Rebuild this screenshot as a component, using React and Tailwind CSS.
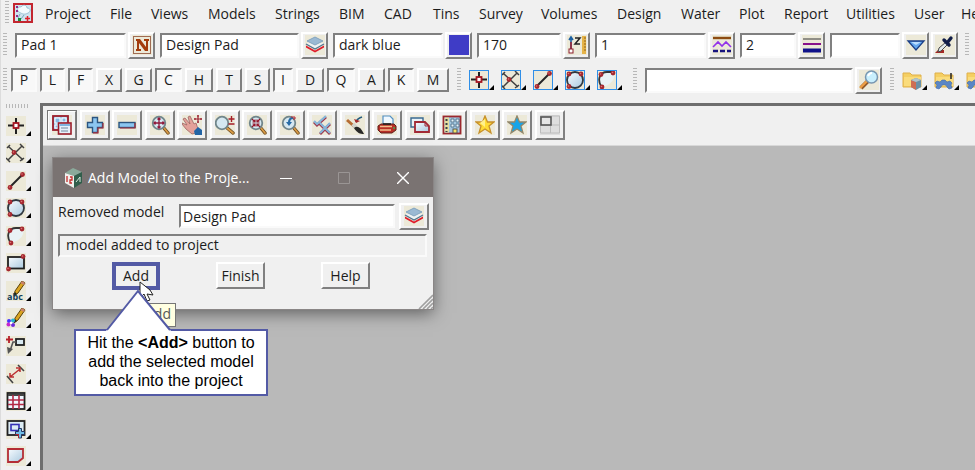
import { useState } from "react";
import clsx from "clsx";

const menus = [
  "Project", "File", "Views", "Models", "Strings", "BIM", "CAD", "Tins", "Survey",
  "Volumes", "Design", "Water", "Plot", "Report", "Utilities", "User", "Help",
];

const snaps = [
  { key: "P", on: true, width: "w-[26px]" },
  { key: "L", on: true, width: "w-[25px]" },
  { key: "F", on: true, width: "w-[25px]" },
  { key: "X", on: false, width: "w-[26px]" },
  { key: "G", on: false, width: "w-[27px]" },
  { key: "C", on: true, width: "w-[27px]" },
  { key: "H", on: false, width: "w-[28px]" },
  { key: "T", on: false, width: "w-[26px]" },
  { key: "S", on: false, width: "w-[25px]" },
  { key: "I", on: true, width: "w-[20px]" },
  { key: "D", on: false, width: "w-[28px]" },
  { key: "Q", on: true, width: "w-[28px]" },
  { key: "A", on: false, width: "w-[27px]" },
  { key: "K", on: true, width: "w-[26px]" },
  { key: "M", on: false, width: "w-[32px]" },
];

const raised = "border-2 border-t-white border-l-white border-r-[#808080] border-b-[#808080] bg-[#f0f0f0]";
const sunken = "border-2 border-t-[#808080] border-l-[#808080] border-r-[#fafafa] border-b-[#fafafa]";

function Icon({ children, bg = "#ece9d8" }) {
  return (
    <svg width="20" height="20" viewBox="0 0 20 20" fill="none" className="shrink-0" aria-hidden="true">
      <defs>
        <linearGradient id="glass" x1="0" y1="0" x2="1" y2="1">
          <stop offset="0" stopColor="#f8fcff" />
          <stop offset="1" stopColor="#aac9df" />
        </linearGradient>
      </defs>
      <rect width="20" height="20" fill={bg} />
      {children}
    </svg>
  );
}

function Dot({ x, y }) {
  return (
    <>
      <circle cx={x} cy={y} r="2.4" fill="#a52830" />
      <circle cx={x - 0.5} cy={y - 0.5} r="0.8" fill="#d87878" />
    </>
  );
}

const Lens = ({ x = 9, y = 8 }) => (
  <>
    <path d={`M${x + 4} ${y + 4}L18 18`} stroke="#6b4a20" strokeWidth="3.4" strokeLinecap="round" />
    <path d={`M${x + 5} ${y + 5}L18 18`} stroke="#d99b45" strokeWidth="1.8" strokeLinecap="round" />
    <circle cx={x} cy={y} r="6.3" fill="#d5e8f1" stroke="#71868b" strokeWidth="1.8" />
  </>
);

const PointIcon = ({ bg }) => (
  <Icon bg={bg}>
    <path d="M10 2v16M2 9.5h16" stroke="#202020" strokeWidth="2" />
    <rect x="7.5" y="7" width="5" height="5" fill="#fff" stroke="#a51420" strokeWidth="1.8" />
  </Icon>
);

const CrossIcon = ({ bg }) => (
  <Icon bg={bg}>
    <path d="M3 4l14 13M2 17L16 3M1 5l3-3M14 1l4 4M0 15l4 4M14 18l4-3" stroke="#404040" strokeWidth="1.5" />
    <Dot x={8} y={9.5} />
  </Icon>
);

const LineIcon = ({ bg }) => (
  <Icon bg={bg}>
    <path d="M4 16L16 4" stroke="#252525" strokeWidth="2" />
    <Dot x={4} y={16.5} />
    <Dot x={16.5} y={3.5} />
  </Icon>
);

const CircleIcon = ({ bg }) => (
  <Icon bg={bg}>
    <circle cx="10" cy="10" r="8" fill="url(#glass)" stroke="#303840" strokeWidth="1.8" />
    <Dot x={4} y={4} />
    <Dot x={16} y={4} />
    <Dot x={4} y={16.5} />
  </Icon>
);

const ArcIcon = ({ bg }) => (
  <Icon bg={bg}>
    <path d="M4 17C0 11 2 3 9 2h7c4 6-2 13-11 15z" fill="#e9f2f5" />
    <path d="M4 16C0 9 3 2 10 2h5" stroke="#353535" strokeWidth="1.8" />
    <Dot x={4} y={4.5} />
    <Dot x={16} y={3} />
    <Dot x={5} y={17} />
  </Icon>
);

const RectIcon = () => (
  <Icon>
    <rect x="2" y="4" width="16" height="11.5" fill="url(#glass)" stroke="#202020" strokeWidth="1.8" />
    <Dot x={17} y={3.5} />
    <Dot x={2.5} y={16} />
  </Icon>
);

const Pencil = () => (
  <>
    <path d="M16 0l3 2-7 10-4 3 1-5z" fill="#dba520" stroke="#5b430c" strokeWidth="1" />
    <path d="M16 0l3 2-1.500 2-3-2z" fill="#c98270" />
    <path d="M8 15l1-4 2 2z" fill="#222" />
  </>
);

const TextIcon = () => (
  <Icon>
    <Pencil />
    <text x="1" y="19" fontFamily="Open Sans, sans-serif" fontSize="9" fontWeight="700" fill="#123f5c">abc</text>
  </Icon>
);

const PaintIcon = () => (
  <Icon>
    <Pencil />
    <circle cx="3" cy="13" r="2" fill="#4436ff" />
    <circle cx="7" cy="12.500" r="2" fill="#24b6d4" />
    <circle cx="2.500" cy="16.500" r="2" fill="#c626cf" />
    <circle cx="7" cy="17" r="2" fill="#6d2bdc" />
    <circle cx="5" cy="15" r="1.300" fill="#fff" />
  </Icon>
);

const LeaderIcon = () => (
  <Icon>
    <path d="M3 0v7M0 3.500h7" stroke="#b5202b" strokeWidth="1.800" />
    <rect x="10" y="3" width="8" height="6" fill="#d9eaf2" stroke="#222" strokeWidth="1.800" />
    <path d="M10 6H7L4 15" stroke="#555" strokeWidth="1.600" />
    <path d="M1 11l1 7 5-5z" fill="#555" />
  </Icon>
);

const MeasureIcon = () => (
  <Icon>
    <path d="M12 1l6 6M1 12l6 7" stroke="#444" strokeWidth="1.600" />
    <path d="M4 13L14 5M4 9v4h4M10 4l4 0v4" stroke="#bc2f30" strokeWidth="1.500" />
  </Icon>
);

const GridIcon = () => (
  <Icon>
    <rect x="1.500" y="2" width="17" height="16" fill="#f0f7ff" stroke="#222" strokeWidth="1.800" />
    <path d="M2 4h16" stroke="#444" strokeWidth="2" />
    <path d="M7 4v14M13 4v14M2 9h16M2 13.500h16" stroke="#b32a45" strokeWidth="1.600" />
  </Icon>
);

const InsertIcon = () => (
  <Icon>
    <rect x="1.500" y="2" width="17" height="14" fill="#dcecf4" stroke="#222" strokeWidth="1.800" />
    <rect x="5" y="5.500" width="8" height="6" stroke="#3530b5" strokeWidth="1.600" />
    <path d="M12.500 9.500h3v3h3v3h-3v3.500h-3v-3.500h-3v-3h3z" fill="#70bde7" stroke="#26345e" strokeWidth="1" />
    <path d="M9.500 15.500h3V19" stroke="#b62633" />
  </Icon>
);

const ShapeIcon = () => (
  <Icon>
    <path d="M2 3h15v9l-5 4H2z" fill="url(#glass)" stroke="#b42d36" strokeWidth="1.800" />
  </Icon>
);

const LayersIcon = () => (
  <Icon>
    <path d="M1 10.500l9 5 9-5v2l-9 5-9-5z" fill="#e01f2c" />
    <path d="M1 9l9-4 9 4-9 5z" fill="#eef2f2" />
    <path d="M1 9l9 5 9-5" stroke="#52748e" strokeWidth="1.300" />
    <path d="M2 6l8-4 8 4-8 4z" fill="#9bb9d3" stroke="#7599b8" strokeWidth="0.800" />
  </Icon>
);

const viewTools = [
  { name: "Window menu", icon: (
    <Icon>
      <rect x="1" y="1" width="15" height="14" fill="#a8cce9" stroke="#9b1c2b" strokeWidth="1.800" />
      <path d="M3 3h5v5H3zM10 3h4v4h-4zM3 10h3v3H3z" fill="#83b9e4" stroke="#fff" />
      <rect x="6.500" y="8" width="12.500" height="11" fill="#e6f1fa" stroke="#9b1c2b" strokeWidth="1.600" />
      <path d="M7.500 10h10.500" stroke="#7fb4df" strokeWidth="2" />
      <path d="M9 13h7M9 16h7" stroke="#7388a0" />
    </Icon>
  ) },
  { name: "Add model", icon: (
    <Icon>
      <path d="M7.500 2.500h5v5h5v5h-5v5h-5v-5h-5v-5h5z" fill="#8cc6f0" stroke="#2c5580" strokeWidth="1.400" />
      <path d="M8 17.800h5V13h5V8" stroke="#a62d39" strokeWidth="1.200" />
    </Icon>
  ) },
  { name: "Remove model", icon: (
    <Icon>
      <rect x="2" y="7.500" width="16" height="5" fill="#8cc6f0" stroke="#2c5580" strokeWidth="1.400" />
      <path d="M3 13h15V8" stroke="#a62d39" strokeWidth="1.200" />
    </Icon>
  ) },
  { name: "Fit", icon: (
    <Icon>
      <Lens />
      <path d="M9 3v10M4 8h10M7.500 4.500L9 3l1.500 1.500M7.500 11.500L9 13l1.500-1.500M5.500 6.500L4 8l1.500 1.500M12.500 6.500L14 8l-1.500 1.500" stroke="#8f1839" strokeWidth="1.300" />
    </Icon>
  ) },
  { name: "Pan", icon: (
    <Icon>
      <path d="M0 8l5 2-4-6 2-1 5 6-2-7 2-1 4 8 2-1 2 6-2 4-4 1-6-5-4-5z" fill="#e3a19a" stroke="#9d6662" strokeWidth="0.800" />
      <path d="M12 16l4-4 4 3v5h-7z" fill="#2264a5" />
      <path d="M16 0v8M12 4h8M15 1h2M15 7h2M13 3v2M19 3v2" stroke="#9b1f2f" strokeWidth="1.200" />
    </Icon>
  ) },
  { name: "Zoom", icon: (
    <Icon>
      <Lens x={7} />
      <path d="M16.500 1v6M13.500 4h6M13.500 9h6" stroke="#a51d27" strokeWidth="1.400" />
    </Icon>
  ) },
  { name: "Shrink", icon: (
    <Icon>
      <Lens />
      <path d="M5 4l3 3M13 4l-3 3M5 12l3-3M13 12l-3-3M8 4.500v2.500H5.500M10 4.500v2.500h2.500M8 11.500V9H5.500M10 11.500V9h2.500" stroke="#95162b" strokeWidth="1.200" />
    </Icon>
  ) },
  { name: "Zoom previous", icon: (
    <Icon>
      <Lens />
      <path d="M13 3c-3 0-4 2-4 5" stroke="#276ba5" strokeWidth="2.200" />
      <path d="M6 7h6l-3 4z" fill="#276ba5" />
      <path d="M11 2h4v2h-2" stroke="#b52632" />
    </Icon>
  ) },
  { name: "Toggle", icon: (
    <Icon>
      <path d="M2 7l3 3 9-8M8 9l10 10M18 9L8 19" stroke="#9d3148" strokeWidth="2.800" />
      <path d="M2 6l3 3 9-8M8 8l10 10M18 8L8 18" stroke="#87b7da" strokeWidth="2.200" />
    </Icon>
  ) },
  { name: "Redraw", icon: (
    <Icon>
      <path d="M2 5l9 8" stroke="#b66d34" strokeWidth="3" />
      <path d="M8 9l4 5" stroke="#d3d3cb" strokeWidth="4" />
      <path d="M9 13c3-3 7-1 10 6-4 0-7-1-10-6z" fill="#292927" />
      <path d="M11 7c1-3 3-4 6-5" stroke="#245b7e" strokeWidth="1.800" />
      <path d="M9 4l2 4 4-2" fill="#a62829" />
    </Icon>
  ) },
  { name: "Plot", icon: (
    <Icon>
      <path d="M6 10V1h7l3 3v6z" fill="#eff8ff" stroke="#5290c4" strokeWidth="1.200" />
      <path d="M1 11l3-2h13l2 2v4l-4 3H4l-3-3z" fill="#b82e26" stroke="#61201d" />
      <path d="M3 11.500h12M3 15h11" stroke="#f2bf8d" strokeWidth="1.600" />
      <path d="M6 9h8" stroke="#222" strokeWidth="1.600" />
      <path d="M16 13h2" stroke="#48a453" strokeWidth="1.500" />
    </Icon>
  ) },
  { name: "Copy view", icon: (
    <Icon>
      <path d="M1 3h12v9H1z" fill="#e9f2f6" stroke="#386991" strokeWidth="1.400" />
      <path d="M5 7h10l4 4v6H5z" fill="url(#glass)" stroke="#a12934" strokeWidth="1.800" />
      <path d="M15 7v4h4" stroke="#a12934" />
    </Icon>
  ) },
  { name: "Building", icon: (
    <Icon>
      <rect x="1.500" y="1.500" width="17" height="17" fill="#a3c7df" stroke="#9b2730" strokeWidth="1.800" />
      <path d="M2.500 2.500H7v15H2.500z" fill="#e5dc9f" />
      <path d="M4.500 4v13" stroke="#38424a" strokeWidth="2" strokeDasharray="2 2" />
      <path d="M9 4h3v3H9zM14 4h3v3h-3zM9 9h3v3H9zM14 9h3v3h-3z" fill="#e6f3fb" stroke="#45657e" strokeWidth="0.800" />
      <rect x="11" y="14" width="4" height="4" fill="#f4e469" stroke="#555" />
    </Icon>
  ) },
  { name: "Favourites", icon: (
    <Icon>
      <path d="M10 1l2.500 6H19l-5 4 2 7-6-4-6 4 2-7-5-4h6.500z" fill="#ffdb35" stroke="#c7902c" strokeWidth="1.300" />
      <path d="M10 4v8L5 8z" fill="#fff08d" />
    </Icon>
  ) },
  { name: "User favourites", icon: (
    <Icon>
      <path d="M10 1l2.500 6H19l-5 4 2 7-6-4-6 4 2-7-5-4h6.500z" fill="#16a4e8" stroke="#92876b" strokeWidth="1.300" />
    </Icon>
  ) },
  { name: "Layout", icon: (
    <Icon bg="#dedede">
      <path d="M.5 1h19v17H.5zM10.500 1v17M1 10h18" stroke="#bcbcbc" />
      <rect x="1" y="2" width="10" height="8" fill="#e5e5e5" stroke="#555" strokeWidth="1.600" />
    </Icon>
  ) },
];

const cadTools = [
  { name: "Point", icon: <PointIcon /> },
  { name: "Intersection", icon: <CrossIcon /> },
  { name: "Line", icon: <LineIcon /> },
  { name: "Circle", icon: <CircleIcon /> },
  { name: "Arc", icon: <ArcIcon /> },
  { name: "Rectangle", icon: <RectIcon /> },
  { name: "Text", icon: <TextIcon /> },
  { name: "Symbol", icon: <PaintIcon /> },
  { name: "Leader", icon: <LeaderIcon /> },
  { name: "Dimension", icon: <MeasureIcon /> },
  { name: "Table", icon: <GridIcon /> },
  { name: "Insert", icon: <InsertIcon /> },
  { name: "Polygon", icon: <ShapeIcon /> },
];

const FolderIcon = ({ children }) => (
  <Icon bg="#f0f0f0">
    <path d="M1 3h7l2 2h9v12H1z" fill="#f5cf62" stroke="#dfb04a" />
    <path d="M2 7h17v9H2z" fill="#fadc7c" />
    {children}
  </Icon>
);

const Gear = () => (
  <path d="M2 18l1-3-2-2 2-2 3 1 2-2h3l2 2 3-1 2 2-1 2 1 3-3 1-2-2c-1-3-5-3-6 0l-2 2z" fill="#5b86c5" stroke="#3f68aa" strokeWidth="0.600" />
);

function Grip({ vertical = true }) {
  return (
    <div
      className={clsx(
        "shrink-0",
        vertical
          ? "w-1 h-6 bg-[repeating-linear-gradient(180deg,#b8b8b8_0_1px,#f0f0f0_1px_3px)]"
          : "h-1 w-6 bg-[repeating-linear-gradient(90deg,#b8b8b8_0_1px,#f0f0f0_1px_3px)]"
      )}
    />
  );
}

function ToolButton({ label, children, className }) {
  return (
    <button aria-label={label} className={clsx("flex shrink-0 items-center justify-center", raised, className)}>
      {children}
    </button>
  );
}

// flat icon with the little fly-out corner beside it
function FlyoutButton({ label, children, framed }) {
  return (
    <button aria-label={label} className="flex shrink-0 items-end">
      <span className={clsx("flex", framed && "size-5 overflow-hidden outline-1 -outline-offset-1 outline-[#2f8fe8]")}>{children}</span>
      <svg width="5" height="5" viewBox="0 0 5 5"><path d="M5 0v5H0z" fill="#000" /></svg>
    </button>
  );
}

function Field({ label, value, className, button, icon }) {
  return (
    <div className="flex shrink-0 items-center gap-0.5">
      <input aria-label={label} defaultValue={value} className={clsx("h-[25px] bg-white px-1 pb-0.5 text-sm outline-none", sunken, className)} />
      <ToolButton label={button} className="size-[27px]">{icon}</ToolButton>
    </div>
  );
}

function MenuBar() {
  return (
    <nav className="flex h-[25px] items-center gap-2 pl-1">
      <Grip />
      <svg width="20" height="20" viewBox="0 0 20 20" className="-ml-1 shrink-0" aria-hidden="true">
        <rect x="1" y="1" width="18" height="18" fill="#cfe3ee" stroke="#c3262f" strokeWidth="2" />
        <path d="M6 9c-3-2-1-6 2-5 2-3 6-2 6 1 4 0 4 4 1 5-3 2-6 1-9-1z" fill="#f4fafd" stroke="#8db6cb" strokeWidth="0.800" />
        <path d="M7 11l-2 4M11 12l-3 4" stroke="#76a8bd" />
        <path d="M3 3h2v2H3zM3 7h2v2H3zM3 12h2v2H3z" fill="#922d88" />
        <path d="M5 15h3v3H5z" fill="#188a34" />
        <path d="M12 15.500h5M14.500 13v5" stroke="#e0202a" strokeWidth="1.500" />
      </svg>
      <ul className="grid grid-cols-[65px_41px_57px_67px_64px_45px_49px_46px_62px_76px_64px_58px_45px_62px_68px_47px_47px] pl-1">
        {menus.map((m) => (
          <li key={m}><button className="text-sm">{m}</button></li>
        ))}
      </ul>
    </nav>
  );
}

function FieldBar() {
  return (
    <div className="flex h-10 items-center gap-[5px] pl-0.5">
      <Grip />
      <div className="flex items-center gap-[5px] pl-[3px]">
        <Field label="Name" value="Pad 1" className="w-[111px]" button="Names" icon={
          <Icon>
            <rect x="1.500" y="1.500" width="17" height="17" stroke="#a06b52" />
            <path d="M4 4h4l6 8V6h-2V4h5v2h-1v10h-3L7 8v6h2v2H4v-2h1V6H4z" fill="#a33b0b" />
          </Icon>
        } />
        <Field label="Model" value="Design Pad" className="w-[139px]" button="Models" icon={<LayersIcon />} />
        <Field label="Colour" value="dark blue" className="w-[110px]" button="Colours" icon={<Icon bg="#3f3cc6" />} />
        <Field label="Height" value="170" className="w-[84px]" button="Heights" icon={
          <Icon>
            <path d="M4 14V3M2 5l2-3 2 3" stroke="#1b5fa0" strokeWidth="1.600" />
            <path d="M4 7v7" stroke="#a51f2b" strokeWidth="1.500" />
            <rect x="2" y="14" width="4" height="4" fill="#fff" stroke="#8b1e2b" />
            <path d="M8 3h5l-5 6h5" stroke="#222" strokeWidth="1.500" />
            <rect x="15" y="1" width="4" height="18" fill="#e5b348" />
            <path d="M17 3h2M17 6h2M17 9h2M17 12h2M17 15h2" stroke="#92641a" />
          </Icon>
        } />
        <Field label="Line style" value="1" className="w-[111px]" button="Line styles" icon={
          <Icon>
            <path d="M1 3h18" stroke="#8d4c12" strokeWidth="2.400" />
            <path d="M1 12l5-5 4 4 4-4 5 5" stroke="#9232ea" strokeWidth="1.600" />
            <path d="M1 16h5M8 16h5M15 16h4" stroke="#17147e" strokeWidth="2.400" />
          </Icon>
        } />
        <Field label="Weight" value="2" className="w-[56px]" button="Weights" icon={
          <Icon>
            <path d="M1 4h18" stroke="#343434" />
            <path d="M1 9h18" stroke="#88128a" strokeWidth="2" />
            <path d="M1 15.500h18" stroke="#101289" strokeWidth="4" />
          </Icon>
        } />
        <Field label="Tinable" value="" className="w-[70px]" button="Tinable choices" icon={
          <Icon>
            <path d="M2 6h16l-8 9z" fill="#62a6ef" stroke="#1b3e86" strokeWidth="1.300" />
            <path d="M5 7h10l-5 3z" fill="#b9dcff" />
          </Icon>
        } />
      </div>
      <ToolButton label="Pick" className="-ml-[3px] size-[27px]">
        <Icon>
          <path d="M0 18h9v-3H3z" fill="#a32925" />
          <path d="M3 17l1-4 7-6 2 2-7 7z" fill="#dfe8ec" stroke="#4a4a4a" />
          <path d="M9 5l5 5M12 8l4-5" stroke="#101d48" strokeWidth="3.400" strokeLinecap="round" />
        </Icon>
      </ToolButton>
      <div className="pl-0.5"><Grip /></div>
    </div>
  );
}

function SnapBar() {
  const [active, setActive] = useState(snaps.filter((s) => s.on).map((s) => s.key));

  const toggle = (key) => {
    setActive(active.includes(key) ? active.filter((k) => k !== key) : [...active, key]);
  };

  return (
    <div className="flex h-[30px] items-center gap-2 pl-0.5">
      <Grip />
      <div className="-ml-1 flex gap-[3px]">
        {snaps.map(({ key, width }) => (
          <button
            key={key}
            aria-pressed={active.includes(key)}
            onClick={() => toggle(key)}
            className={clsx("h-6 shrink-0 text-sm leading-5", width, active.includes(key) ? ["bg-[#f8f8f8]", sunken] : raised)}
          >
            {key}
          </button>
        ))}
      </div>
      <Grip />
      <div className="flex gap-[7px]">
        <FlyoutButton label="Point snap" framed><PointIcon /></FlyoutButton>
        <FlyoutButton label="Intersection snap" framed><CrossIcon /></FlyoutButton>
        <FlyoutButton label="Line snap" framed><LineIcon /></FlyoutButton>
        <FlyoutButton label="Circle snap" framed><CircleIcon /></FlyoutButton>
        <FlyoutButton label="Arc snap" framed><ArcIcon /></FlyoutButton>
      </div>
      <div className="pl-[3px]"><Grip /></div>
      <Field label="Search" value="" className="w-[208px]" button="Find" icon={
        <Icon>
          <path d="M9 11l-7 7" stroke="#8f5828" strokeWidth="4" />
          <path d="M8 11l-7 7" stroke="#ec9e44" strokeWidth="2.400" />
          <circle cx="12.500" cy="7" r="6" fill="#c8effd" stroke="#7896b0" strokeWidth="1.500" />
          <path d="M9 6c1-2 2-3 4-3" stroke="#fff" strokeWidth="2" />
        </Icon>
      } />
      <Grip />
      <div className="flex gap-[7px]">
        <FlyoutButton label="Project folder">
          <FolderIcon>
            <path d="M9 10l5-2 5 2v7l-5 3-5-3z" fill="#6a91a7" />
            <path d="M9 10l5 2v8l-5-3z" fill="#ce6e54" />
            <path d="M9 10l5-2 5 2-5 2z" fill="#b2c4cb" />
          </FolderIcon>
        </FlyoutButton>
        <FlyoutButton label="Setup folder">
          <FolderIcon><Gear /><path d="M17 3v6" stroke="#222" strokeWidth="1.500" /></FolderIcon>
        </FlyoutButton>
        <FlyoutButton label="User folder"><FolderIcon><Gear /></FolderIcon></FlyoutButton>
      </div>
    </div>
  );
}

function Callout() {
  return (
    <div className="absolute left-[21px] top-[131px] w-[194px]">
      <svg width="66" height="42" viewBox="0 0 66 42" className="relative z-10 -mb-0.5 ml-8 block" aria-hidden="true">
        <path d="M0 42L32 2l33 40z" fill="#fff" />
        <path d="M1 41L32 2l32 39" fill="none" stroke="#535aa5" strokeWidth="2" />
      </svg>
      <p className="border-2 border-[#535aa5] bg-white px-1 pb-1 pt-0.5 text-center font-['Liberation_Sans',Arial,sans-serif] text-base leading-[19px] text-black">
        Hit the <b>&lt;Add&gt;</b> button to add the selected model back into the project
      </p>
    </div>
  );
}

function AddModelDialog() {
  return (
    <section role="dialog" aria-labelledby="dialog-title" className="absolute left-2.5 top-3 w-[380px] bg-[#f0f0f0] shadow-[0_4px_16px_rgba(0,0,0,0.5)] outline-1 outline-[#8a8686]">
      <header className="flex h-[39px] items-center bg-[#7a7372] pl-3 text-white">
        <svg width="17" height="20" viewBox="0 0 17 20" className="shrink-0" aria-hidden="true">
          <path d="M0 5l8-5 9 4-8 4z" fill="#8baa9b" />
          <path d="M0 5l9 3v12l-9-5z" fill="#f0f0ed" />
          <path d="M9 8l8-4v11l-8 5z" fill="#315e4b" />
          <path d="M2 8v6M5 9h2v3H5v3h2" stroke="#c32a2a" strokeWidth="1.300" fill="none" />
          <path d="M11 14l4-5v5" stroke="#d9e7dd" fill="none" />
        </svg>
        <h1 id="dialog-title" className="min-w-0 flex-1 whitespace-nowrap pl-1.5 text-sm">Add Model to the Proje...</h1>
        <div className="flex shrink-0">
          <button aria-label="Minimize" className="flex w-[58px] justify-center">
            <svg width="12" height="12" viewBox="0 0 12 12"><path d="M0 6.500h12" stroke="#fff" /></svg>
          </button>
          <button aria-label="Maximize" disabled className="flex w-[58px] justify-center">
            <svg width="12" height="12" viewBox="0 0 12 12"><path d="M.5.5h11v11H.5z" stroke="#9a9594" fill="none" /></svg>
          </button>
          <button aria-label="Close" className="flex w-[60px] justify-center">
            <svg width="12" height="12" viewBox="0 0 12 12"><path d="M0 0l12 12M12 0L0 12" stroke="#fff" strokeWidth="1.400" /></svg>
          </button>
        </div>
      </header>
      <div className="pl-[5px] pr-1 pt-[5px]">
        <div className="flex items-center gap-1">
          <label htmlFor="removed" className="w-[117px] pb-2 text-sm">Removed model</label>
          <input id="removed" defaultValue="Design Pad" className={clsx("h-6 min-w-0 flex-1 bg-white px-0.5 text-sm outline-none", sunken)} />
          <ToolButton label="Select model" className="h-[27px] w-[30px]"><LayersIcon /></ToolButton>
        </div>
        <output className={clsx("mr-0.5 mt-1 block h-[23px] px-1.5 text-sm leading-[18px]", sunken)}>model added to project</output>
      </div>
      <div className="flex gap-14 px-[59px] pb-[19px] pt-[5px]">
        <button className="h-7 w-[48px] border-4 border-[#535aa5] bg-[#f0f0f0] text-sm leading-5">Add</button>
        <button className={clsx("h-[27px] w-[49px] text-sm leading-5", raised)}>Finish</button>
        <button className={clsx("h-[27px] w-[49px] text-sm leading-5", raised)}>Help</button>
      </div>
      <svg width="15" height="15" viewBox="0 0 15 15" className="absolute bottom-0 right-0" aria-hidden="true">
        <path d="M1 15L15 1M5 15L15 5M9 15l6-6M13 15l2-2" stroke="#a0a0a0" strokeWidth="1.600" />
      </svg>
      <div role="tooltip" className="absolute left-[87px] top-[145px] h-6 border border-[#767676] bg-[#ffffe1] px-1 text-sm leading-5 text-[#575757]">Add</div>
      <svg width="16" height="24" viewBox="0 0 16 24" className="absolute left-[86px] top-[123px]" aria-hidden="true">
        <path d="M1 1v16l4-4 3 7 3-1-3-6 6 1-3-5z" fill="#fff" stroke="#222" />
      </svg>
      <Callout />
    </section>
  );
}

export default function App() {
  return (
    <div className="flex min-h-screen flex-col overflow-hidden border-l border-[#dcdcdc] bg-[#f0f0f0] font-['Open_Sans','Noto_Sans',sans-serif] text-[#1c1c1c]">
      <MenuBar />
      <FieldBar />
      <SnapBar />
      <div className="flex flex-1 pt-2">
        <aside className="flex w-[39px] shrink-0 flex-col gap-1 pl-[5px] pt-px">
          <Grip vertical={false} />
          <div className="flex flex-1 flex-col">
            {cadTools.map((t) => (
              <div key={t.name} className="flex flex-1 items-center">
                <FlyoutButton label={t.name}>{t.icon}</FlyoutButton>
              </div>
            ))}
          </div>
        </aside>
        <main className="flex min-w-0 flex-1 flex-col border-l-[3px] border-t-[3px] border-[#6e6e6e] bg-[#b9b9b9]">
          <div className="h-10 border-b border-[#d8d8d8] bg-[#f0f0f0] pl-1 pt-1">
            <div className="grid w-[520px] grid-cols-16">
              {viewTools.map((t, i) => (
                <ToolButton key={t.name} label={t.name} className={clsx("size-[30px]", i === 0 && "outline-1 -outline-offset-1 outline-[#777]")}>
                  {t.icon}
                </ToolButton>
              ))}
            </div>
          </div>
          <div className="relative flex-1">
            <AddModelDialog />
          </div>
        </main>
      </div>
    </div>
  );
}
